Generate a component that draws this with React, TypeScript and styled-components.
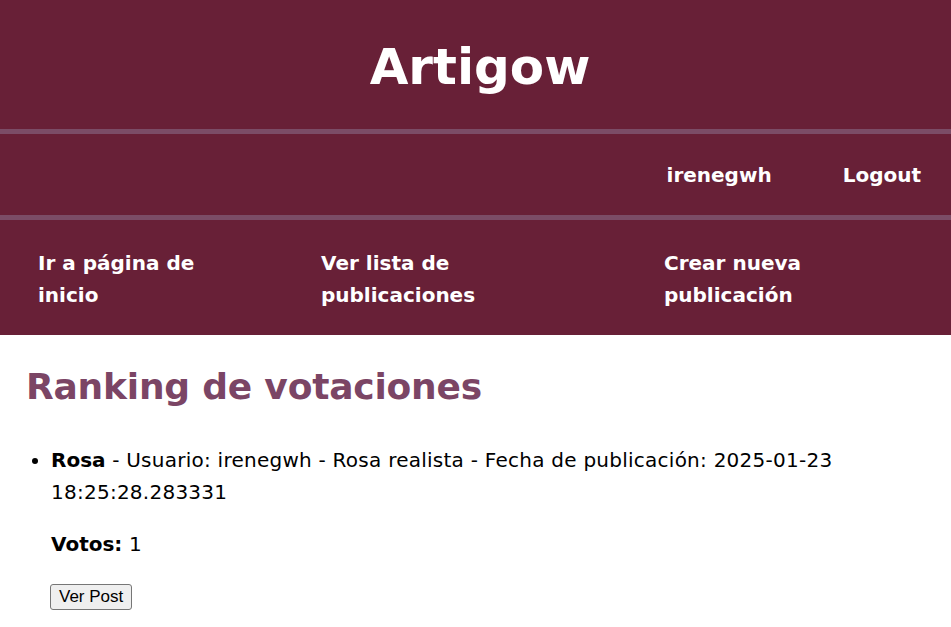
import React from "react";
import styled, { createGlobalStyle } from "styled-components";

const Global = createGlobalStyle`
  html, body { margin: 0; padding: 0; background: #ffffff; }
  body { font-family: "DejaVu Sans", Verdana, sans-serif; color: #000; }
`;

const Header = styled.header`
  background: #682037;
  color: #ffffff;
`;

const Title = styled.h1`
  margin: 0;
  height: 129px;
  box-sizing: border-box;
  padding: 38px 0 0 9px;
  text-align: center;
  font-size: 50px;
  line-height: 58px;
  font-weight: bold;
`;

const Divider = styled.div`
  height: 5px;
  background: #7b4c66;
`;

const UserBar = styled.div`
  height: 81px;
  display: flex;
  align-items: center;
  justify-content: flex-end;
  gap: 71px;
  padding-right: 30px;
  font-size: 20px;
  font-weight: bold;
`;

const UserLink = styled.span`
  line-height: 32px;
`;

const Nav = styled.nav`
  display: grid;
  grid-template-columns: 283px 343px 1fr;
  padding: 27px 0 24px;
`;

const NavItem = styled.a`
  padding: 0 38px;
  color: #ffffff;
  text-decoration: none;
  font-size: 20px;
  font-weight: bold;
  line-height: 32px;
`;

const Main = styled.main`
  padding: 0 26px;
`;

const Heading = styled.h2`
  margin: 28px 0 0;
  color: #7b4565;
  font-size: 36px;
  letter-spacing: -0.2px;
  line-height: 48px;
  font-weight: bold;
`;

const List = styled.ul`
  margin: 33px 0 0;
  padding-left: 25px;
  font-size: 20px;
  line-height: 32px;
  letter-spacing: 0.25px;
`;

const Item = styled.li``;

const Strong = styled.b`
  letter-spacing: 0;
`;

const Votes = styled.p`
  margin: 20px 0 0;
`;

const ButtonRow = styled.div`
  margin-top: 22px;
  margin-left: -1px;
  line-height: 26px;
  letter-spacing: 0;
`;

const Button = styled.button`
  height: 26px;
  padding: 0 8px;
  font-family: "Liberation Sans", Arial, sans-serif;
  font-size: 17px;
  color: #000;
  background: #efefef;
  border: 1px solid #767676;
  border-radius: 3px;
  cursor: pointer;
`;

export default function App() {
  return (
    <>
      <Global />
      <Header>
        <Title>Artigow</Title>
        <Divider />
        <UserBar>
          <UserLink>irenegwh</UserLink>
          <UserLink>Logout</UserLink>
        </UserBar>
        <Divider />
        <Nav>
          <NavItem href="#">Ir a página de inicio</NavItem>
          <NavItem href="#">Ver lista de publicaciones</NavItem>
          <NavItem href="#">Crear nueva publicación</NavItem>
        </Nav>
      </Header>
      <Main>
        <Heading>Ranking de votaciones</Heading>
        <List>
          <Item>
            <Strong>Rosa</Strong> - Usuario: irenegwh - Rosa realista - Fecha de publicación: 2025-01-23 18:25:28.283331
            <Votes>
              <Strong>Votos:</Strong> 1
            </Votes>
            <ButtonRow>
              <Button>Ver Post</Button>
            </ButtonRow>
          </Item>
        </List>
      </Main>
    </>
  );
}
